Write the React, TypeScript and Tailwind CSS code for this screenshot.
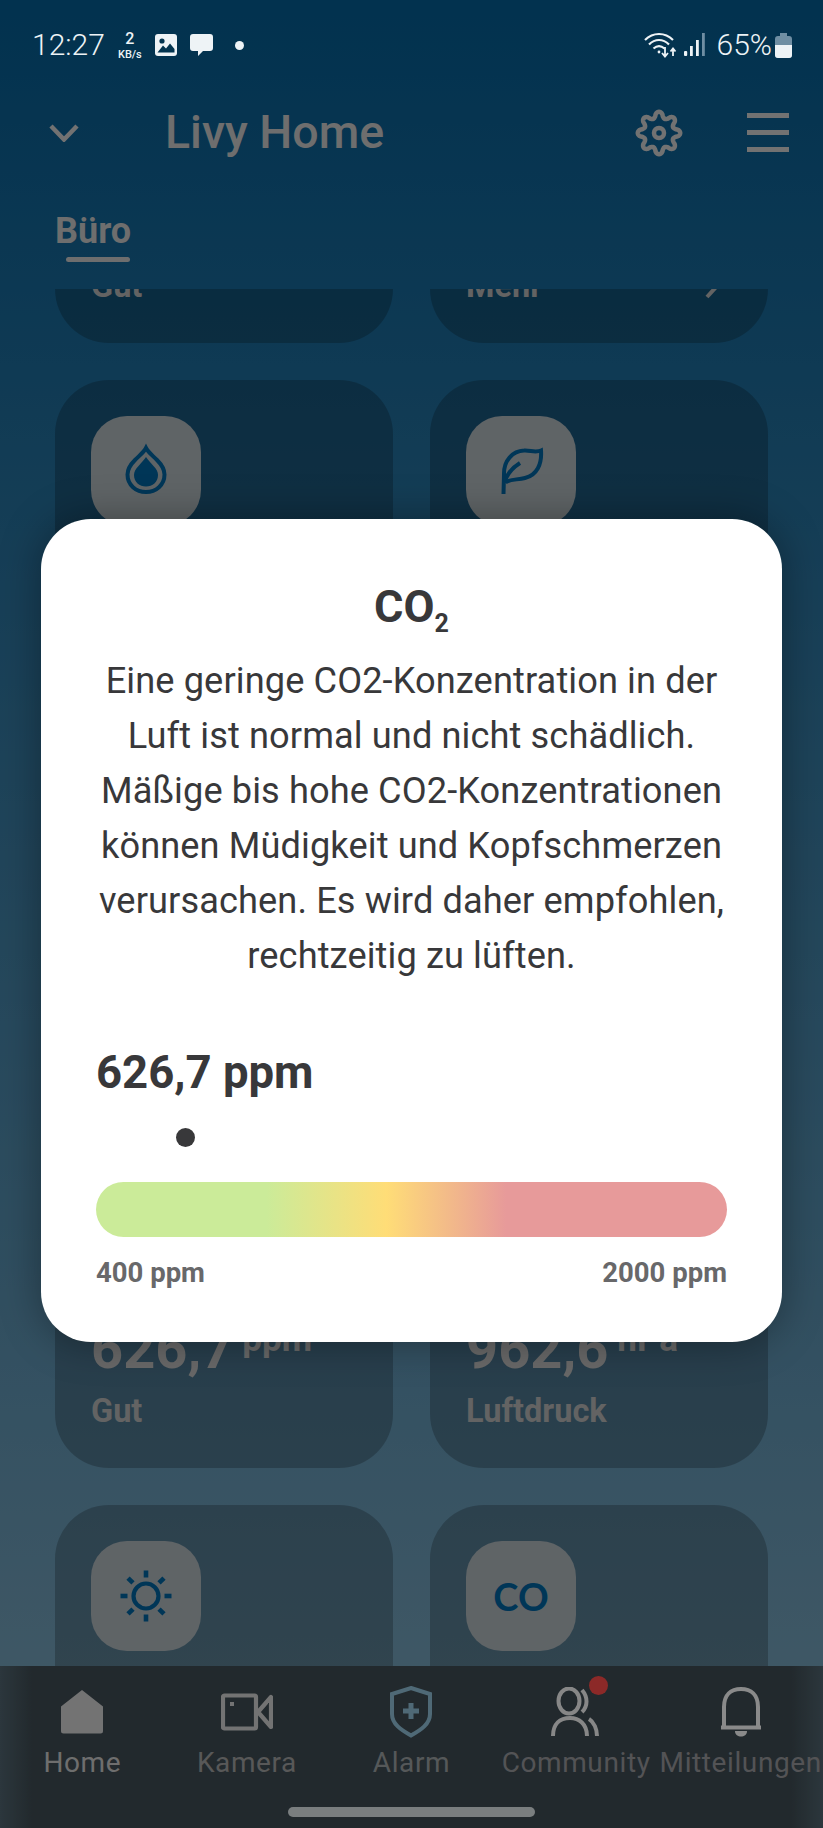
import React from "react";

const BLUE = "#01639f";

function gearPath() {
  const pts: string[] = [];
  for (let i = 0; i < 320; i++) {
    const t = (i / 320) * Math.PI * 2;
    const c = Math.cos(8 * t);
    const wave = Math.sign(c) * Math.pow(Math.abs(c), 0.7);
    const r = 18.2 + 3 * wave;
    pts.push(`${(25 + r * Math.sin(t)).toFixed(2)} ${(25 - r * Math.cos(t)).toFixed(2)}`);
  }
  return "M" + pts.join("L") + "Z";
}

function Tile({ children }: { children: React.ReactNode }) {
  return (
    <div className="flex h-[110px] w-[110px] items-center justify-center rounded-[36px] bg-[#adb6bb]">
      {children}
    </div>
  );
}

function Card({
  icon,
  value,
  unit,
  label,
  right,
}: {
  icon?: React.ReactNode;
  value?: string;
  unit?: string;
  label?: string;
  right?: string;
}) {
  return (
    <div className="h-[338px] rounded-[54px] bg-black/[0.22] px-[36px] pt-[36px]">
      <div className="h-[110px]">{icon && <Tile>{icon}</Tile>}</div>
      <div className="mt-[43px] flex h-[60px] items-start text-[#bdbdbd]">
        {value && <span className="text-[56px] font-bold leading-[60px]">{value}</span>}
        {unit && <span className="ml-[9px] text-[35px] font-bold leading-[42px]">{unit}</span>}
      </div>
      <div className="mt-[14px] flex h-[36px] items-center justify-between pr-[12px] text-[32.5px] font-bold leading-[36px] text-[#b4b4b4]">
        <span>{label}</span>
        {right && (
          <>
            <span className="mr-auto">{right}</span>
            <svg width="16" height="26" viewBox="0 0 16 26" fill="none" stroke="#b4b4b4" strokeWidth="4">
              <path d="M3 2 L13 13 L3 24" />
            </svg>
          </>
        )}
      </div>
    </div>
  );
}

function NavItem({ icon, label, labelClass }: { icon: React.ReactNode; label: string; labelClass: string }) {
  return (
    <div className="flex flex-col items-center">
      <div className="flex h-[56px] w-[60px] items-center justify-center">{icon}</div>
      <span className={`mt-[7px] whitespace-nowrap text-[28px] leading-[32px] tracking-[0.6px] ${labelClass}`}>
        {label}
      </span>
    </div>
  );
}

export default function App() {
  return (
    <div className="relative flex h-[1828px] w-[823px] flex-col overflow-hidden bg-[linear-gradient(180deg,#045b90_0%,#73a0b9_92%)] font-['Roboto',sans-serif]">
      {/* status bar, above the scrim */}
      <div className="relative z-20 flex h-[90px] items-center pl-[32px] pr-[31px] text-[#eef3f6]">
        <span className="text-[30px] font-light leading-none">12:27</span>
        <div className="ml-[10px] flex w-[30px] flex-col items-center font-medium">
          <span className="text-[16px] leading-[19px]">2</span>
          <span className="text-[11px] leading-[13px]">KB/s</span>
        </div>
        <svg className="ml-[10px]" width="22" height="22" viewBox="0 0 22 22">
          <rect width="22" height="22" rx="3" fill="#eef3f6" />
          <circle cx="7" cy="7" r="2.6" fill="#03344f" />
          <path d="M2.5 18.5 L8 11.5 L11 14.5 L15 9.5 L19.5 15 V18.5 Z" fill="#03344f" />
        </svg>
        <svg className="ml-[13px]" width="23" height="23" viewBox="0 0 23 23">
          <path d="M3 0 H20 a3 3 0 0 1 3 3 V14 a3 3 0 0 1 -3 3 H13 L8 22 V17 H3 a3 3 0 0 1 -3 -3 V3 a3 3 0 0 1 3 -3 Z" fill="#eef3f6" />
        </svg>
        <span className="ml-[22px] h-[9px] w-[9px] rounded-full bg-[#eef3f6]" />
        <svg className="ml-auto" width="33" height="26" viewBox="0 0 33 26" fill="none" stroke="#eef3f6" strokeWidth="2.2">
          <path d="M1 8 C9 0 21 0 29 8" />
          <path d="M5 12.5 C11 6.5 19 6.5 25 12.5" />
          <path d="M9.5 16.5 C13 13.5 17 13.5 20.5 16.5" />
          <circle cx="15" cy="20" r="1.4" fill="#eef3f6" stroke="none" />
          <path d="M21 15 V24 M18 21 L21 24.5 L24 21" strokeWidth="1.8" />
          <path d="M29 24 V17 M26.5 19.5 L29 16.5 L31.5 19.5" strokeWidth="1.8" />
        </svg>
        <svg className="ml-[7px]" width="21" height="24" viewBox="0 0 21 24" fill="#eef3f6">
          <rect x="0" y="18" width="3.2" height="5" rx="1" />
          <rect x="6" y="13" width="2.8" height="10" />
          <rect x="12" y="7" width="2.8" height="16" />
          <rect x="18" y="0" width="2.8" height="23" fill="#6f8ea3" />
        </svg>
        <span className="ml-[12px] text-[30px] font-light leading-none">65%</span>
        <svg className="ml-[3px]" width="17" height="25" viewBox="0 0 17 25">
          <path d="M5 0 H12 V3 H14 a3 3 0 0 1 3 3 V22 a3 3 0 0 1 -3 3 H3 a3 3 0 0 1 -3 -3 V6 a3 3 0 0 1 3 -3 H5 Z" fill="#6f8ea3" />
          <path d="M0 12 H17 V22 a3 3 0 0 1 -3 3 H3 a3 3 0 0 1 -3 -3 Z" fill="#eef3f6" />
        </svg>
      </div>

      {/* app bar */}
      <div className="flex h-[85px] items-center pl-[49px] pr-[34px]">
        <svg width="30" height="18" viewBox="0 0 30 18" fill="none" stroke="#d0d0d0" strokeWidth="4.5">
          <path d="M2 2 L15 15.5 L28 2" />
        </svg>
        <span className="ml-[86px] text-[46.5px] font-medium leading-none text-[#c8c8c8]">Livy Home</span>
        <svg className="ml-auto" width="50" height="50" viewBox="0 0 50 50" fill="none" stroke="#d0d0d0" strokeWidth="4.5">
          <path d={gearPath()} strokeLinejoin="round" />
          <circle cx="25" cy="25" r="5" />
        </svg>
        <div className="ml-[63px] flex w-[42px] flex-col gap-[12px]">
          <span className="h-[5px] bg-[#d0d0d0]" />
          <span className="h-[5px] bg-[#d0d0d0]" />
          <span className="h-[5px] bg-[#d0d0d0]" />
        </div>
      </div>

      {/* tabs */}
      <div className="flex h-[114px] flex-col items-start pl-[55px] pt-[31px]">
        <span className="text-[36px] font-bold leading-[50px] text-[#c8c8c8]">Büro</span>
        <span className="ml-[11px] mt-[1px] h-[5px] w-[64px] rounded-full bg-[#c8c8c8]" />
      </div>

      {/* scrolled list */}
      <div className="flex-1 overflow-hidden">
        <div className="-mt-[284px] grid grid-cols-2 gap-[37px] px-[55px]">
          <Card label="Gut" />
          <Card right="Mehr" />
          <Card
            icon={
              <svg width="60" height="60" viewBox="0 0 60 60">
                <path d="M30 7 C32 11 36 14 41 19 C46 24 48.5 28 48.5 33.5 C48.5 44 40 51 30 51 C20 51 11.5 44 11.5 33.5 C11.5 28 14 24 19 19 C24 14 28 11 30 7 Z" fill="none" stroke={BLUE} strokeWidth="4" />
                <path d="M30 16 C32 19 35 22 37.5 25 C40.5 28 42 31 42 34 C42 41 36.5 45.5 30 45.5 C23.5 45.5 18 41 18 34 C18 31 19.5 28 22.5 25 C25 22 28 19 30 16 Z" fill={BLUE} />
              </svg>
            }
          />
          <Card
            icon={
              <svg width="60" height="60" viewBox="0 0 60 60" fill="none" stroke={BLUE} strokeWidth="4">
                <path d="M12.5 53 L13 34 C12.5 19 22 10 33 9.5 C39 9 44 12 50 9.5 C51 23 46 34 34 37 C26 39 19 38 14.5 41.5" />
                <path d="M14 41 C16 32 21 27 29 22" />
              </svg>
            }
          />
          <Card />
          <Card />
          <Card value="626,7" unit="ppm" label="Gut" />
          <Card value="962,6" unit="hPa" label="Luftdruck" />
          <Card
            icon={
              <svg width="60" height="60" viewBox="0 0 60 60" fill={BLUE}>
                <circle cx="30" cy="30" r="12.5" fill="none" stroke={BLUE} strokeWidth="4.2" />
                <rect x="27.7" y="4.5" width="4.6" height="7" />
                <rect x="27.7" y="48.5" width="4.6" height="7" />
                <rect x="4.5" y="27.7" width="7" height="4.6" />
                <rect x="48.5" y="27.7" width="7" height="4.6" />
                <rect x="-3.5" y="-2.3" width="7" height="4.6" transform="translate(14.5 14.5) rotate(45)" />
                <rect x="-3.5" y="-2.3" width="7" height="4.6" transform="translate(45.5 45.5) rotate(45)" />
                <rect x="-3.5" y="-2.3" width="7" height="4.6" transform="translate(45.5 14.5) rotate(-45)" />
                <rect x="-3.5" y="-2.3" width="7" height="4.6" transform="translate(14.5 45.5) rotate(-45)" />
              </svg>
            }
          />
          <Card icon={<span className="font-['Lato',sans-serif] text-[38px] font-bold leading-none text-[#01639f]">CO</span>} />
        </div>
      </div>

      {/* bottom navigation */}
      <div className="relative z-0 h-[162px] bg-[linear-gradient(90deg,#50646f_0%,#3e4b52_4%,#3e4b52_96%,#50646f_100%)] pt-[18px]">
        <div className="grid grid-cols-5">
          <NavItem
            labelClass="text-[#c8c8c8]"
            icon={
              <svg width="42" height="44" viewBox="0 0 42 44" fill="#d2d2d2">
                <path d="M21 0 L42 16.5 V41 a2.5 2.5 0 0 1 -2.5 2.5 H2.5 A2.5 2.5 0 0 1 0 41 V16.5 Z" />
              </svg>
            }
            label="Home"
          />
          <NavItem
            labelClass="text-[#a0a0a0]"
            icon={
              <svg width="52" height="38" viewBox="0 0 52 38" fill="none" stroke="#d2d2d2" strokeWidth="4.2">
                <rect x="2" y="2.5" width="33" height="33" rx="1.5" />
                <path d="M50 4 V34 L37 19 Z" strokeLinejoin="round" />
                <rect x="9" y="9" width="4" height="4" fill="#d2d2d2" stroke="none" />
              </svg>
            }
            label="Kamera"
          />
          <NavItem
            labelClass="text-[#9ca0a2]"
            icon={
              <svg width="42" height="52" viewBox="0 0 42 52" fill="none" stroke="#90c0d8" strokeWidth="4">
                <path d="M21 2 L40 8 V28 C40 38 31 44 21 49.5 C11 44 2 38 2 28 V8 Z" />
                <path d="M21 17 V33 M13 25 H29" strokeWidth="5" />
              </svg>
            }
            label="Alarm"
          />
          <NavItem
            labelClass="text-[#98989c]"
            icon={
              <div className="relative h-[50px] w-[50px]">
                <svg width="50" height="50" viewBox="0 0 50 50" fill="none" stroke="#f6f6f6" strokeWidth="4">
                  <ellipse cx="18" cy="14" rx="10.5" ry="12.5" />
                  <path d="M2 49 C2 37 9 31 19 31 C28 31 36 37 36 49" />
                  <path d="M31 3 C37 10 37 19 31 25" />
                  <path d="M38 32 C43 35 46 42 46 49" />
                </svg>
                <span className="absolute -right-[7px] -top-[11px] h-[19px] w-[19px] rounded-full bg-[#ff4c49]" />
              </div>
            }
            label="Community"
          />
          <NavItem
            labelClass="text-[#98989c]"
            icon={
              <svg width="40" height="50" viewBox="0 0 40 50" fill="none" stroke="#fbfbfb" strokeWidth="4">
                <path d="M3 40 V20 C3 8 10 2 20 2 C30 2 37 8 37 20 V40" />
                <path d="M0 40.5 H40" />
                <path d="M14 44 H26 C26 48 23 49.5 20 49.5 C17 49.5 14 48 14 44 Z" fill="#fbfbfb" stroke="none" />
              </svg>
            }
            label="Mitteilungen"
          />
        </div>
        <div className="absolute bottom-[11px] left-[288px] h-[10px] w-[247px] rounded-full bg-[#dfe6e8]" />
      </div>

      {/* scrim */}
      <div className="absolute inset-0 z-10 bg-black/45" />

      {/* dialog */}
      <div className="absolute left-[41px] right-[41px] top-[519px] z-30 h-[823px] rounded-[50px] bg-white px-[55px] pt-[60px] text-[#38383a] shadow-[0_0_40px_rgba(0,0,0,0.35)]">
        <h2 className="text-center text-[45px] font-bold leading-[56px]">
          CO<span className="align-[-10px] text-[25px] leading-none">2</span>
        </h2>
        <p className="mx-[-6px] mt-[17px] text-center text-[36.2px] leading-[55px] tracking-[0.1px]">
          Eine geringe CO2-Konzentration in der Luft ist normal und nicht schädlich. Mäßige bis hohe CO2-Konzentrationen können Müdigkeit und Kopfschmerzen verursachen. Es wird daher empfohlen, rechtzeitig zu lüften.
        </p>
        <div className="mt-[62px] text-[45.5px] font-bold leading-[56px]">626,7 ppm</div>
        <div className="relative mt-[27px] h-[19px]">
          <span className="absolute left-[80px] top-0 h-[19px] w-[19px] rounded-full bg-[#38383a]" />
        </div>
        <div className="mt-[35px] h-[55px] rounded-full bg-[linear-gradient(90deg,#cbeb99_0%,#cbeb99_27%,#ffdd77_46%,#e79a9a_65%,#e79a9a_100%)]" />
        <div className="mt-[18px] flex justify-between text-[27.5px] font-bold leading-[36px] text-[#68686a]">
          <span>400 ppm</span>
          <span>2000 ppm</span>
        </div>
      </div>
    </div>
  );
}
